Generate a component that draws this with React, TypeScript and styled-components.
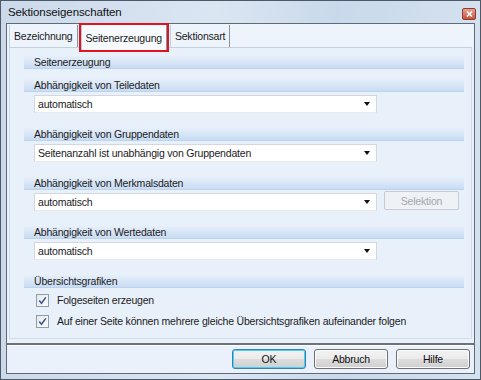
import React from "react";
import styled, { createGlobalStyle } from "styled-components";

const Global = createGlobalStyle`
  html, body { margin: 0; padding: 0; background: #cdd9e6; }
  * { box-sizing: border-box; }
  body { font-family: "Liberation Sans", Arial, sans-serif; font-size: 10.5px; letter-spacing: -0.2px; color: #1b1b1b; }
`;

const Window = styled.div`
  width: 481px;
  height: 380px;
  display: flex;
  flex-direction: column;
  border: 1px solid #4d5966;
  background: linear-gradient(90deg, #cbd9ea 0%, #dbe6f3 45%, #c9d9eb 70%, #d4e1ef 100%);
`;

const TitleBar = styled.div`
  height: 22px;
  flex: none;
  display: flex;
  align-items: center;
  justify-content: space-between;
  padding: 0 4px 0 7px;
`;

const Title = styled.span`
  font-size: 11.5px;
  letter-spacing: -0.1px;
  color: #111;
`;

const CloseButton = styled.div`
  width: 14px;
  height: 12px;
  margin-top: 3px;
  border: 1px solid #8e3b2c;
  border-radius: 2px;
  background: linear-gradient(#e9a192, #c9523c);
  display: flex;
  align-items: center;
  justify-content: center;
`;

const Client = styled.div`
  flex: 1;
  margin: 0 5px 5px 5px;
  border: 1px solid #606a76;
  background: #eaf1fa;
  display: flex;
  flex-direction: column;
`;

const TabRow = styled.div`
  height: 23px;
  flex: none;
  display: flex;
  align-items: stretch;
  padding: 1px 0 0 2px;
  background: #eef4fb;
`;

const Tab = styled.div<{ $active?: boolean; $marked?: boolean }>`
  display: flex;
  align-items: center;
  padding: 0 4px;
  margin-right: ${(p) => (p.$marked ? "3px" : "0")};
  margin-left: ${(p) => (p.$marked ? "3px" : "0")};
  margin-bottom: ${(p) => (p.$marked ? "-3px" : "0")};
  border-left: 1px solid ${(p) => (p.$active ? "#b9c6d6" : "#c5d0dd")};
  border-right: 1px solid #8a929c;
  background: ${(p) => (p.$active ? "#f7fafd" : "transparent")};
  outline: ${(p) => (p.$marked ? "2px solid #e0141e" : "none")};
  outline-offset: 0;
  position: relative;
  z-index: ${(p) => (p.$marked ? 1 : 0)};
`;

const TabPage = styled.div`
  flex: 1;
  margin: 0 2px;
  border: 1px solid #d2dce8;
  border-top-color: #c3cfdd;
  background: #e8f0fa;
  padding: 7px 7px 0 14px;
  display: flex;
  flex-direction: column;
`;

const Header = styled.div`
  height: 14px;
  padding-left: 10px;
  display: flex;
  align-items: center;
  background: linear-gradient(#e9f1fb, #c9dcf3);
  border-bottom: 1px solid #bcd3ee;
`;

const Group = styled.div<{ $gap: number }>`
  display: flex;
  flex-direction: column;
  margin-top: ${(p) => p.$gap}px;
`;

const FieldRow = styled.div`
  display: flex;
  align-items: center;
  gap: 7px;
  margin: 3px 0 0 10px;
`;

const Select = styled.div`
  width: 343px;
  height: 18px;
  background: #ffffff;
  border: 1px solid #d4d8de;
  border-bottom-color: #e6e9ee;
  display: flex;
  align-items: center;
  justify-content: space-between;
  padding: 0 6px 0 3px;
`;

const Arrow = styled.span`
  width: 0;
  height: 0;
  border-left: 3.5px solid transparent;
  border-right: 3.5px solid transparent;
  border-top: 4px solid #111;
`;

const DisabledButton = styled.div`
  width: 75px;
  height: 19px;
  border: 1px solid #c8ccd2;
  border-radius: 2px;
  background: #eef1f5;
  color: #a3a8ae;
  display: flex;
  align-items: center;
  justify-content: center;
  margin-top: -3px;
`;

const CheckRow = styled.label<{ $gap: number }>`
  display: flex;
  align-items: center;
  gap: 8px;
  margin: ${(p) => p.$gap}px 0 0 12px;
  height: 14px;
`;

const CheckBox = styled.span`
  width: 13px;
  height: 13px;
  border: 1px solid #8f9cab;
  background: linear-gradient(135deg, #e4e8ee, #fbfcfd);
  display: flex;
  align-items: center;
  justify-content: center;
`;

const Separator = styled.div`
  height: 3px;
  flex: none;
  margin: 4px 0 0 0;
  border-top: 2px solid #6d737b;
  border-bottom: 1px solid #ffffff;
`;

const ButtonBar = styled.div`
  height: 27px;
  flex: none;
  display: flex;
  justify-content: flex-end;
  align-items: center;
  gap: 8px;
  padding: 0 4px 1px 0;
  background: #eaf1fa;
`;

const Button = styled.div<{ $default?: boolean }>`
  width: 74px;
  height: 20px;
  border: 1px solid ${(p) => (p.$default ? "#3c7fb1" : "#707070")};
  border-radius: 3px;
  background: linear-gradient(#f2f2f2 0%, #ebebeb 50%, #dddddd 51%, #cfcfcf 100%);
  box-shadow: inset 0 0 0 1px ${(p) => (p.$default ? "#48d0f5" : "#fbfbfb")};
  display: flex;
  align-items: center;
  justify-content: center;
  color: #111;
`;

const Check = () => (
  <svg width="9" height="9" viewBox="0 0 9 9">
    <path d="M1.2 4.6 L3.5 7.2 L7.8 1.4" fill="none" stroke="#3a5685" strokeWidth="1.5" />
  </svg>
);

const groups = [
  { label: "Abhängigkeit von Teiledaten", value: "automatisch" },
  { label: "Abhängigkeit von Gruppendaten", value: "Seitenanzahl ist unabhängig von Gruppendaten" },
  { label: "Abhängigkeit von Merkmalsdaten", value: "automatisch", button: "Selektion" },
  { label: "Abhängigkeit von Wertedaten", value: "automatisch" },
];

export default function App() {
  return (
    <>
      <Global />
      <Window>
        <TitleBar>
          <Title>Sektionseigenschaften</Title>
          <CloseButton>
            <svg width="7" height="6" viewBox="0 0 7 6">
              <path d="M1 0.5 L6 5.5 M6 0.5 L1 5.5" stroke="#ffffff" strokeWidth="1.6" />
            </svg>
          </CloseButton>
        </TitleBar>
        <Client>
          <TabRow>
            <Tab>Bezeichnung</Tab>
            <Tab $active $marked>Seitenerzeugung</Tab>
            <Tab>Sektionsart</Tab>
          </TabRow>
          <TabPage>
            <Header>Seitenerzeugung</Header>
            {groups.map((g, i) => (
              <Group key={g.label} $gap={i === 0 ? 9 : 14}>
                <Header>{g.label}</Header>
                <FieldRow>
                  <Select>
                    <span>{g.value}</span>
                    <Arrow />
                  </Select>
                  {g.button && <DisabledButton>{g.button}</DisabledButton>}
                </FieldRow>
              </Group>
            ))}
            <Group $gap={14}>
              <Header>Übersichtsgrafiken</Header>
              <CheckRow $gap={5}>
                <CheckBox><Check /></CheckBox>
                Folgeseiten erzeugen
              </CheckRow>
              <CheckRow $gap={7}>
                <CheckBox><Check /></CheckBox>
                Auf einer Seite können mehrere gleiche Übersichtsgrafiken aufeinander folgen
              </CheckRow>
            </Group>
          </TabPage>
          <Separator />
          <ButtonBar>
            <Button $default>OK</Button>
            <Button>Abbruch</Button>
            <Button>Hilfe</Button>
          </ButtonBar>
        </Client>
      </Window>
    </>
  );
}
